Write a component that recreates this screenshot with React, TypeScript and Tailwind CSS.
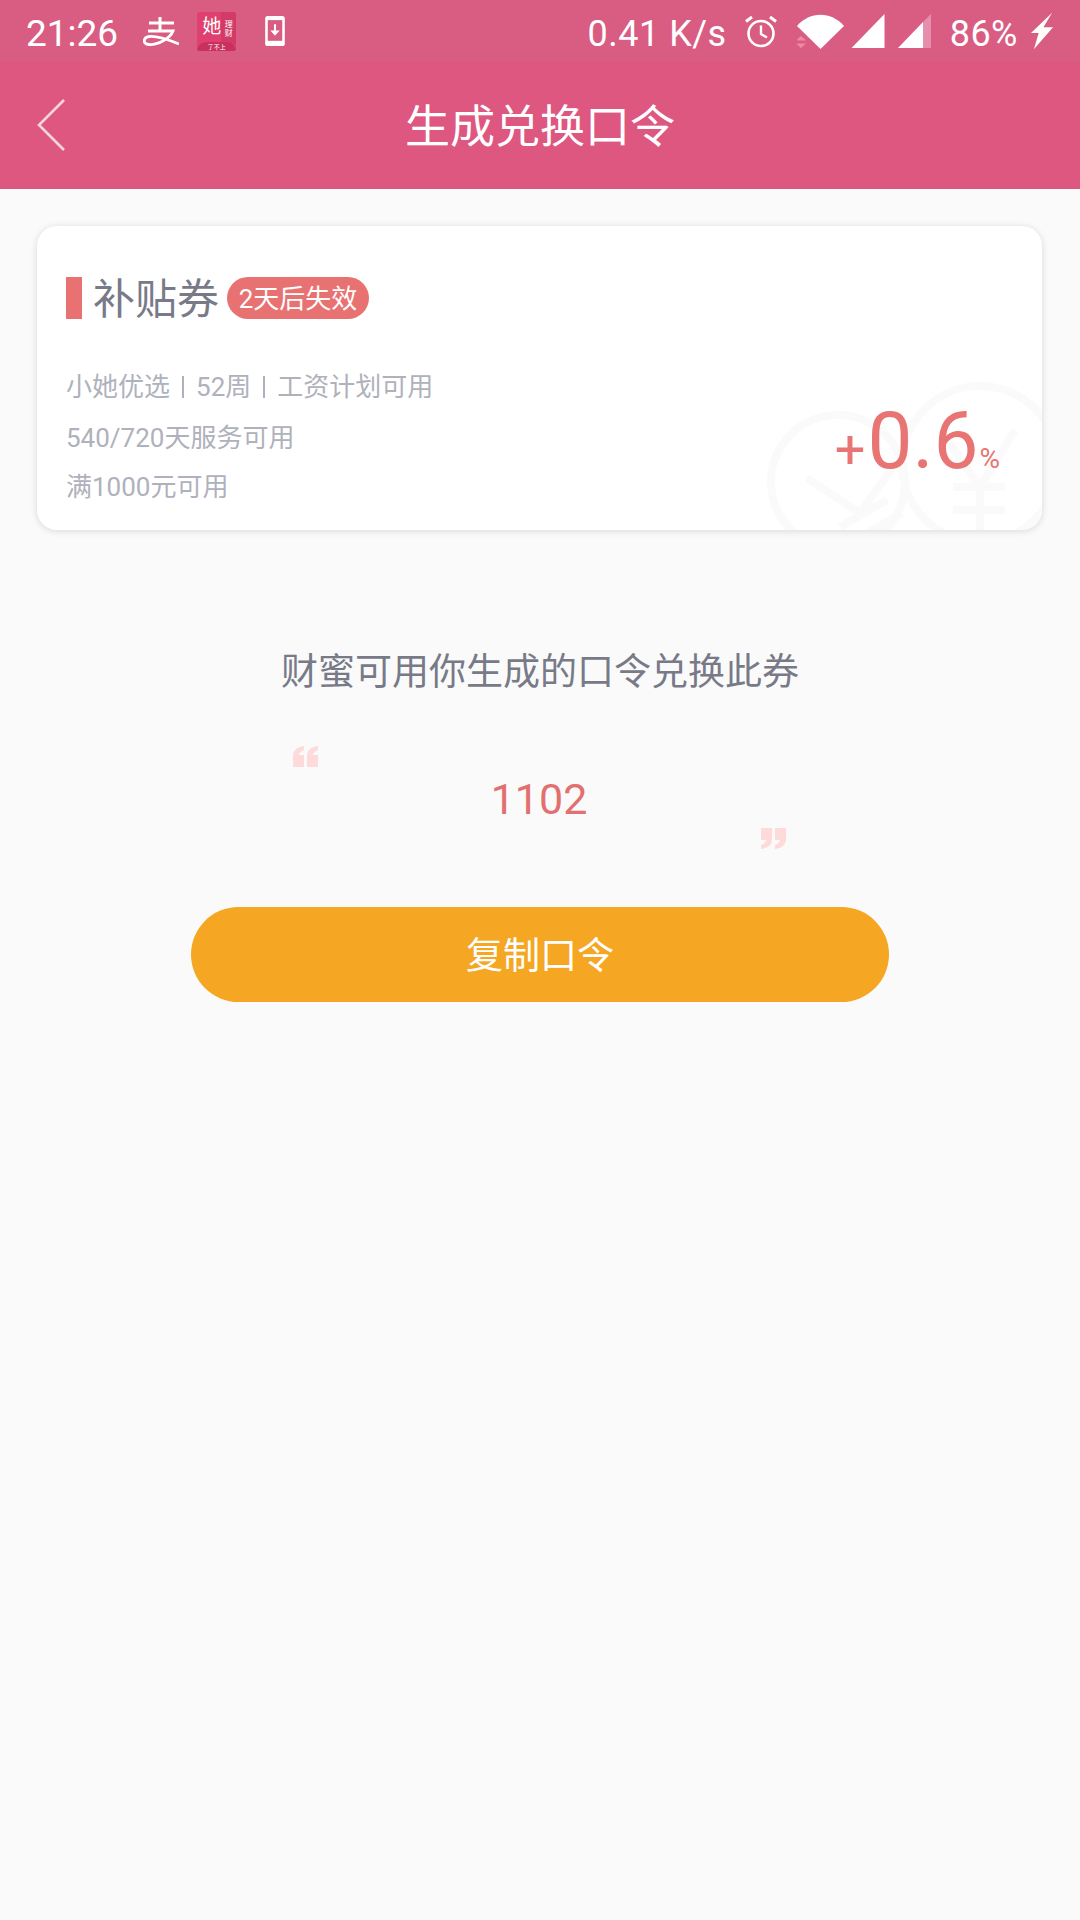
export default function App() {
  const cjk = { fontFamily: 'Roboto, "Noto Sans CJK SC", sans-serif' };
  return (
    <div className="w-[1080px] h-[1920px] bg-[#fafafa] flex flex-col overflow-hidden" style={cjk}>
      {/* status bar */}
      <div className="h-[62px] bg-[#d95c82] flex items-center text-white shrink-0">
        <span className="ml-[26px] mt-[5px] text-[37px] leading-none">21:26</span>
        <svg className="ml-[25px]" width="36" height="30" viewBox="0 0 36 30" fill="none" stroke="#fff">
          <path d="M6 7H31" strokeWidth="3" />
          <path d="M17 1V15" strokeWidth="3" />
          <path d="M5 15H30C27 23 14 29 6 28.500C-1 28 0 21 7 20.500C15 20 26 24 36 28" strokeWidth="2.8" />
        </svg>
        <div className="ml-[18px] w-[39px] h-[39px] rounded-[3px] bg-[#e0406f] relative overflow-hidden flex">
          <span className="text-[19px] leading-none mt-[5px] ml-[5px] text-white">她</span>
          <div className="absolute right-0 top-0 w-[15px] h-[33px] bg-[#d23a68] flex flex-col items-center text-[8px] leading-[9px] pt-[8px]">
            <span>理</span>
            <span>财</span>
          </div>
          <div className="absolute bottom-0 left-0 right-0 h-[9px] bg-[#c92f5f] rounded-t-[12px] text-[6px] leading-[9px] text-center">了不上</div>
        </div>
        <svg className="ml-[29px]" width="20" height="31" viewBox="0 0 19 30">
          <rect x="0" y="0" width="19" height="29" rx="2.5" fill="#fff" />
          <rect x="2.5" y="4" width="14" height="20" fill="#d95c82" />
          <path d="M8.500 8H10.500V14H14L9.500 19L5 14H8.500Z" fill="#fff" />
        </svg>
        <span className="ml-auto mt-[5px] text-[36px] leading-none tracking-[0.5px]">0.41 K/s</span>
        <svg className="ml-[17px]" width="34" height="35" viewBox="0 0 34 34" fill="none" stroke="#fff">
          <circle cx="17" cy="19" r="12.5" strokeWidth="2.6" />
          <path d="M17 11V19.500L23 23" strokeWidth="2.4" />
          <path d="M2 7L8 2.500M32 7L26 2.500" strokeWidth="3" />
        </svg>
        <svg className="ml-[19px]" width="47" height="35" viewBox="0 0 47 35">
          <path d="M0 12C13 -3 34 -3 47 12L23.500 35Z" fill="#fff" />
          <path d="M4 22L9 26.500H-1ZM4 34L9 29.500H-1Z" fill="#ee8aa8" />
        </svg>
        <svg className="ml-[7px]" width="35" height="35" viewBox="0 0 34 35">
          <path d="M33 0V34H0Z" fill="#fff" />
        </svg>
        <svg className="ml-[12px]" width="34" height="35" viewBox="0 0 34 35">
          <path d="M33 0V34H25V8Z" fill="#e58fac" />
          <path d="M25 8V34H0Z" fill="#fff" />
        </svg>
        <span className="ml-[18px] mt-[5px] text-[36px] leading-none tracking-[0.5px]">86%</span>
        <svg className="ml-[13px] mr-[26px]" width="23" height="38" viewBox="0 0 24 38">
          <path d="M22 0L13 15H23L3 38L8 21H0Z" fill="#fff" />
        </svg>
      </div>

      {/* title bar */}
      <div className="h-[127px] bg-[#dd5780] shrink-0 relative flex items-center justify-center">
        <svg className="absolute left-[37px] top-[36px]" width="30" height="54" viewBox="0 0 30 54" fill="none" stroke="#f7d5e0" strokeWidth="2.6">
          <path d="M27 2L2 27L27 52" />
        </svg>
        <span className="text-white text-[45px] leading-none mt-[4px]">生成兑换口令</span>
      </div>

      {/* coupon card */}
      <div className="mt-[37px] ml-[37px] w-[1005px] h-[304px] rounded-[20px] bg-white shadow-[0_1px_7px_rgba(0,0,0,0.14)] relative overflow-hidden shrink-0">
        <svg className="absolute left-[730px] top-[152px]" width="275" height="152" viewBox="0 0 275 152" fill="none" stroke="#fafafa" strokeWidth="8">
          <circle cx="71" cy="104" r="67" />
          <path d="M40 100L93 135L125 90M120 122L73 149M135 135L95 158" strokeWidth="8" />
          <circle cx="213" cy="86" r="78" />
          <path d="M173 52L213 109L248 52M186 109H238M186 132H238M213 109V152" strokeWidth="8" />
        </svg>
        <div className="relative pl-[29px] pt-[51px]">
          <div className="flex items-center h-[42px]">
            <div className="w-[16px] h-[42px] bg-[#ea7171]" />
            <span className="ml-[11px] mt-[4px] text-[42px] leading-none text-[#787a88]">补贴券</span>
            <span className="ml-[8px] h-[42px] w-[142px] rounded-full bg-[#e87272] text-white text-[26px] leading-[44px] text-center">2天后失效</span>
          </div>
          <div className="mt-[53px] text-[26px] leading-[30px] text-[#afb1bc] flex items-center">
            <span>小她优选</span>
            <span className="w-[2px] h-[22px] bg-[#afb1bc] mx-[12px]" />
            <span>52周</span>
            <span className="w-[2px] h-[22px] bg-[#afb1bc] mx-[12px]" />
            <span>工资计划可用</span>
          </div>
          <div className="mt-[21px] text-[26px] leading-[30px] text-[#afb1bc]">540/720天服务可用</div>
          <div className="mt-[19px] text-[26px] leading-[30px] text-[#afb1bc]">满1000元可用</div>
        </div>
        <div className="absolute right-[42px] top-[175px] flex items-baseline text-[#e87474] leading-none">
          <span className="text-[54px]">+</span>
          <span className="text-[80px] ml-[2px]">0.6</span>
          <span className="text-[28px] ml-[1px]">%</span>
        </div>
      </div>

      {/* prompt */}
      <div className="mt-[118px] text-center text-[37px] leading-[50px] text-[#787a88]">财蜜可用你生成的口令兑换此券</div>

      <div className="mt-[48px] w-[494px] self-center h-[103px] relative flex items-center justify-center">
        <svg className="absolute left-0 top-0" width="26" height="22" viewBox="0 0 26 22" fill="#ffdada">
          <path d="M0 21V11C0 5 3 1 11 0V4C8 5 6 7 6 9H11V21ZM14 21V11C14 5 17 1 25 0V4C22 5 20 7 20 9H25V21Z" />
        </svg>
        <span className="text-[43px] leading-none text-[#e27070] mt-[3px] ml-[-2px]">1102</span>
        <svg className="absolute right-[1px] bottom-[-1px]" width="26" height="22" viewBox="0 0 26 22" fill="#ffdada">
          <path d="M1 0H12V11C12 16 9 20 1 21V17C4 16 6 14 6 12H1ZM15 0H26V11C26 16 23 20 15 21V17C18 16 20 14 20 12H15Z" />
        </svg>
      </div>

      <div className="mt-[58px] self-center w-[698px] h-[95px] rounded-full bg-[#f5a623] flex items-center justify-center text-white text-[37px] leading-none">
        <span className="mt-[4px]">复制口令</span>
      </div>
    </div>
  );
}
